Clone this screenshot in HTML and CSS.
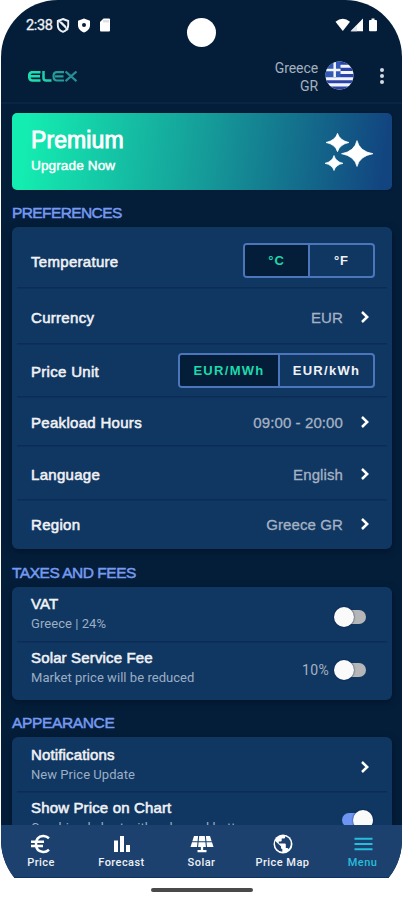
FILE: index.html
```html
<!DOCTYPE html>
<html lang="en">
<head>
<meta charset="utf-8">
<title>ELEX Menu</title>
<link rel="stylesheet" href="styles.css">
</head>
<body>
<svg width="0" height="0" class="defs"><defs>
<symbol id="chev" viewBox="0 0 10 14"><path d="M2 2 7.200 7 2 12" fill="none" stroke="#fff" stroke-width="2.500"/></symbol>
</defs></svg>
<div class="phone">
  <div class="status">
    <span class="time">2:38</span>
    <svg class="st-shield" width="14" height="15" viewBox="0 0 14 15"><path d="M7 1 12.2 3v4.2c0 3-2 5.400-5.200 6.600C3.800 12.600 1.800 10.200 1.800 7.200V3z" fill="none" stroke="#eef2f6" stroke-width="1.900"/><path d="M2 2 12 12M5 4l5 5" stroke="#eef2f6" stroke-width="1.700"/></svg>
    <svg class="st-dot" width="14" height="15" viewBox="0 0 14 15"><path d="M7 .5 13 2.700v4.600c0 3.300-2.400 5.900-6 7.200C3.400 13.200 1 10.600 1 7.300V2.700z" fill="#fff"/><circle cx="7" cy="7" r="2" fill="#04203d"/></svg>
    <svg class="st-card" width="12" height="14" viewBox="0 0 12 14"><path d="M4.500 .5H10q1 0 1 1v11q0 1-1 1H2q-1 0-1-1V4z" fill="#fff"/><path d="M5 2v2.500M7 2v2.500M9 2v2.500" stroke="#aab4bd" stroke-width=".8"/></svg>
    <svg class="st-net" width="44" height="14" viewBox="0 0 44 14"><path d="M.5 3.700Q7.800-2.300 15 3.700L7.800 13z" fill="#fff"/><path d="M28 .5V13.300H15.500z" fill="#fff"/><path d="M22 8v5.300h-6z" fill="#dde3e8"/><path d="M36.500.5h3V2H41q1 0 1 1v9.300q0 1-1 1h-6q-1 0-1-1V3q0-1 1-1h1.500z" fill="#fff"/></svg>
    <span class="camera"></span>
  </div>
  <header class="appbar">
    <svg class="logo" width="50" height="11" viewBox="0 0 50 11" role="img" aria-label="ELEX"><g fill="none" stroke-width="2.200">
      <path d="M12.500 1.200H4.500Q1.200 1.200 1.200 5.300T4.500 9.500h8M2 5.300h10" stroke="#1fdcae" stroke-width="2.600"/>
      <path d="M15.500 0v7q0 2.500 2.700 2.500H23.500" stroke="#20cfaa" stroke-width="2.500"/>
      <path d="M36 1.200h-7q-3.500 0-3.500 4.100t3.500 4.200H36M27 5.300h8.500" stroke="#249c97"/>
      <path d="M37.500.5 48.500 10.200M48.500.5 37.500 10.200" stroke="#278e93"/></g></svg>
    <div class="country">Greece<br>GR</div>
    <svg class="flag" width="29" height="29" viewBox="0 0 29 29"><defs><clipPath id="fc"><circle cx="14.500" cy="14.500" r="14"/></clipPath></defs><g clip-path="url(#fc)"><path fill="#f3f5fc" d="M0 0h29v29H0z"/><path d="M0 2.200h29M0 8.400h29M0 14.600h29M0 20.800h29M0 27h29" stroke="#2b43a6" stroke-width="3.100"/><path fill="#3159b5" d="M0 0h15.500v16H0z"/><path d="M9.700 0v16M0 9h15.500" stroke="#f3f5fc" stroke-width="2.500"/></g></svg>
    <svg class="dots" width="6" height="18" viewBox="0 0 6 18"><g fill="#d3d9e0"><circle cx="3" cy="3" r="2"/><circle cx="3" cy="9" r="2"/><circle cx="3" cy="15" r="2"/></g></svg>
  </header>
  <main>
    <section class="premium">
      <div><div class="p-title">Premium</div><div class="p-sub">Upgrade Now</div></div>
      <svg width="48" height="38" viewBox="0 0 48 38" fill="#fff" stroke="#fff" stroke-width=".7"><path d="M12.500.3Q14.500 7.400 24 9.500 14.500 11.600 12.500 18.700 10.500 11.600 1 9.500 10.500 7.400 12.500.3zM32 7.600Q34.500 18.500 48 20.700 34.500 23 32 33.500 29.500 23 16.500 20.700 29.500 18.500 32 7.600zM9 22.500Q10.500 28.500 18 30.300 10.500 32 9 37.600 7.500 32 0 30.300 7.500 28.500 9 22.500z"/></svg>
    </section>
    <h2 class="h-pref">PREFERENCES</h2>
    <section class="card prefs">
      <div class="row r1"><span class="label l-temp">Temperature</span><div class="seg temp"><span class="on">°C</span><span>°F</span></div></div>
      <div class="row r2"><span class="label">Currency</span><span class="value">EUR</span><svg class="chev"><use href="#chev"/></svg></div>
      <div class="row r3"><span class="label">Price Unit</span><div class="seg unit"><span class="on">EUR/MWh</span><span>EUR/kWh</span></div></div>
      <div class="row r4"><span class="label">Peakload Hours</span><span class="value">09:00 - 20:00</span><svg class="chev"><use href="#chev"/></svg></div>
      <div class="row r5"><span class="label">Language</span><span class="value">English</span><svg class="chev"><use href="#chev"/></svg></div>
      <div class="row r6"><span class="label">Region</span><span class="value">Greece GR</span><svg class="chev"><use href="#chev"/></svg></div>
    </section>
    <h2 class="h-tax">TAXES AND FEES</h2>
    <section class="card taxes">
      <div class="row t1"><div class="label two">VAT<small>Greece | 24%</small></div><span class="switch"><i></i></span></div>
      <div class="row t2"><div class="label two">Solar Service Fee<small>Market price will be reduced</small></div><span class="pct">10%</span><span class="switch"><i></i></span></div>
    </section>
    <h2 class="h-app">APPEARANCE</h2>
    <section class="card appearance">
      <div class="row a1"><div class="label two">Notifications<small>New Price Update</small></div><svg class="chev"><use href="#chev"/></svg></div>
      <div class="row a2"><div class="label two chart">Show Price on Chart<small>Combined chart with solar and battery</small></div><span class="switch active"><i></i></span></div>
    </section>
  </main>
  <nav>
    <a class="n1"><svg width="22" height="20" viewBox="0 0 22 20"><path d="M19 4.300Q16.300 1.900 13 2.100 6 2.700 6 10t7 7.900q3.300.2 6-2.200M1 7.700h13M1 12h12" fill="none" stroke="#fff" stroke-width="2.500"/></svg>Price</a>
    <a class="n2"><svg width="22" height="20" viewBox="0 0 22 20" fill="#fff"><path d="M3 6.500h4V18H3zM9 2h4v16H9zM15 11h4v7h-4z"/></svg>Forecast</a>
    <a class="n3"><svg width="24" height="20" viewBox="0 0 24 20"><path d="M4 2h16l3.500 11H.5z" fill="#fff"/><path d="M8.700 1.500 7.500 13.500M15.300 1.500l1.200 12M1 7.700h22" stroke="#1c416f" stroke-width="1.100"/><path d="M12 12v5M7.500 17.200h9" stroke="#fff" stroke-width="2.300"/></svg>Solar</a>
    <a class="n4"><svg width="22" height="20" viewBox="0 0 22 20"><circle cx="11" cy="10" r="9.500" fill="#fff"/><path d="M3 7l6 5.200v1.500q0 1.300 1.300 1.300v2.800Q3.500 17 3 10zM13.200 2.300v.8q0 1.500-1.500 1.500h-2v2q0 1-1 1H6.800v2h6q1 0 1 1V14h1.200q1.200 0 1.600 1.200 3.200-3.600 1.800-8.200-1.300-3.500-5.200-4.700z" fill="#1c416f"/></svg>Price Map</a>
    <a class="n5"><svg width="22" height="20" viewBox="0 0 22 20"><path d="M2.500 4.700h18M2.500 10h18M2.500 15.300h18" stroke="#27bddb" stroke-width="2"/></svg>Menu</a>
  </nav>
  <div class="gesture"><span></span></div>
</div>
</body>
</html>
```

FILE: styles.css
```css
* { box-sizing: border-box; }
body { margin: 0; background: #fff; overflow: hidden; font-family: "Liberation Sans", Arial, sans-serif; color: #f0f2f6; }
.defs { position: absolute; }
.phone { width: 401px; height: 900px; margin: 0 1px; background: linear-gradient(#041e3a 877px, #fff 877px); border-radius: 57px 57px 60px 60px; overflow: hidden; display: flex; flex-direction: column; }

.status { position: relative; height: 50px; flex: none; display: flex; align-items: flex-start; padding: 18px 23px 0 25px; }
.time { font: 14.5px/15px Roboto, sans-serif; width: 30px; -webkit-text-stroke: .3px; letter-spacing: -.35px; white-space: nowrap; }
.st-dot { margin-left: 7px; }
.st-card { margin-left: 8px; }
.st-net { margin-left: auto; }
.camera { position: absolute; left: 186px; top: 18px; width: 29px; height: 29px; border-radius: 50%; background: #fff; }

.appbar { height: 54px; flex: none; display: flex; align-items: flex-start; padding: 10px 17px 0 27px; border-bottom: 2px solid #082545; }
.logo { margin-top: 11px; }
.country { margin-left: auto; text-align: right; font: 14px/17.500px Roboto, sans-serif; letter-spacing: -.1px; color: #a4b0bf; }
.flag { margin: 1px 0 0 7px; }
.dots { margin: 7px 0 0 25px; }

main { flex: 1; min-height: 0; overflow: hidden; padding: 9px 10px 0 11px; }
.premium { height: 77px; border-radius: 5px; padding: 14px 19px 0 19px; display: flex; justify-content: space-between; background: linear-gradient(97deg, #14edb1 4%, #159b99 51%, #124580 97%); box-shadow: 0 0 2px #00132a; }
.premium svg { margin-top: 6px; overflow: visible; }
.p-title { font-size: 23px; line-height: 26px; letter-spacing: .1px; color: #fff; -webkit-text-stroke: .9px; }
.p-sub { font-size: 13.600px; line-height: 18px; margin-top: 4px; letter-spacing: .1px; color: #fff; -webkit-text-stroke: .45px; }

h2 { margin: 0; font-size: 15.500px; line-height: 18px; font-weight: 400; color: #759af0; -webkit-text-stroke: .5px; white-space: nowrap; }
.h-pref { margin: 14px 0 5px; letter-spacing: -.6px; }
.h-tax { margin: 15px 0 5px; letter-spacing: -.48px; }
.h-app { margin: 14px 0 5px; letter-spacing: -.35px; }

.card { background: #103762; border-radius: 6px; box-shadow: 0 2px 7px #031329; padding: 0 5px; }
.row { display: flex; align-items: center; padding: 0 14px; border-bottom: 1px solid #0a2c55; box-shadow: 0 1px #0d315c; }
.row:last-child { border-bottom: 0; box-shadow: none; }
.prefs { height: 322px; }
.r1 { height: 61px; padding-top: 7px; padding-right: 12px; }
.r2 { height: 56px; padding-top: 3px; }
.r3 { height: 53px; padding-right: 12px; padding-top: 1px; }
.r4 { height: 49px; padding-top: 2px; }
.r5 { height: 54px; padding-top: 3px; }
.r6 { height: 49px; }
.label { flex: 1; font-size: 15px; line-height: 18px; letter-spacing: .3px; -webkit-text-stroke: .55px; white-space: nowrap; }
span.label { padding-top: 2px; }
.r6 span.label { padding-top: 0; }
.value { font-size: 15px; color: #a5b2c3; letter-spacing: .1px; -webkit-text-stroke: .3px; margin-right: 17px; white-space: nowrap; }
.chev { width: 10px; height: 14px; flex: none; margin-right: 3px; margin-top: -1px; }

.seg { display: flex; height: 35px; border: 2px solid #4c76bb; border-radius: 4px; overflow: hidden; font-size: 13px; font-weight: 700; letter-spacing: 1.300px; background: #103762; margin-top: -1px; }
.seg span { flex: 1; display: flex; align-items: center; justify-content: center; padding-top: 1px; }
.seg .on { color: #1dd9ab; background: #041d38; border-right: 2px solid #4c76bb; }
.temp { width: 132px; }
.temp span { letter-spacing: 1px; }
.unit { width: 197px; }
.unit .on { flex: 0 0 100px; }

.taxes { height: 113px; }
.t1 { height: 55px; }
.t2 { height: 58px; }
.label small { display: block; font: 13px/17px Roboto, sans-serif; letter-spacing: .05px; color: #9caec4; -webkit-text-stroke: 0; margin-top: 2px; }
.two { padding-bottom: 1px; letter-spacing: .15px; }
.t2 .two { padding-bottom: 7px; }
.pct { font: 14px Roboto, sans-serif; letter-spacing: .3px; color: #a5b2c3; margin: -2px 8px 0 0; }
.switch { position: relative; width: 31px; height: 14px; border-radius: 7px; background: #b5b6b7; margin: 5px 8px 0 0; flex: none; }
.switch i { position: absolute; left: -3px; top: -3px; width: 20px; height: 20px; border-radius: 50%; background: #fafafa; box-shadow: 0 0 2px #001942; }
.switch:not(.active) { margin-right: 7px; width: 29px; }
.t2 .switch { margin-top: -3px; }
.switch.active { background: #6f95f4; margin: 0 0 0 0; }
.switch.active i { left: 11px; }
.appearance { height: 130px; }
.a1 { height: 55px; }
.a1 .two { padding-bottom: 0; }
.a1 .chev { margin-top: 5px; }
.a2 { height: 55px; }
.a2 .two { padding-bottom: 4px; }

nav { height: 53px; flex: none; background: #1c416f; display: flex; padding: 0 0 0 5px; border-bottom: 1px solid #0b3263; }
nav a { display: flex; flex-direction: column; align-items: center; padding-top: 9px; font: 500 11px/15px Roboto, sans-serif; letter-spacing: .45px; color: #edf0f5; white-space: nowrap; }
nav svg { margin-bottom: 1px; }
.n1 { width: 70px; } .n2 { width: 91px; } .n3 { width: 69px; } .n4 { width: 93px; } .n5 { width: 67px; color: #27bddb; }
.gesture { height: 22px; flex: none; background: #fff; display: flex; justify-content: center; padding-top: 10px; }
.gesture span { width: 102px; height: 4px; border-radius: 2px; background: #4a4a4a; }
```
